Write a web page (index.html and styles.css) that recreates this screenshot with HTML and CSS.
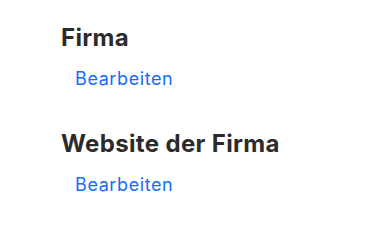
FILE: index.html
```html
<!DOCTYPE html>
<html lang="de">
<head>
<meta charset="utf-8">
<link rel="stylesheet" href="styles.css">
</head>
<body>
<main class="page">
  <section class="field">
    <h2 class="field-title">Firma</h2>
    <a class="field-edit" href="#">Bearbeiten</a>
  </section>
  <section class="field">
    <h2 class="field-title">Website der Firma</h2>
    <a class="field-edit" href="#">Bearbeiten</a>
  </section>
</main>
</body>
</html>
```
FILE: styles.css
```css
html, body {
  margin: 0;
  padding: 0;
  background: #ffffff;
}
.page {
  font-family: Inter, "Liberation Sans", sans-serif;
  padding: 24px 0 0 61px;
  display: flex;
  flex-direction: column;
  gap: 40px;
}
.field {
  display: flex;
  flex-direction: column;
  align-items: flex-start;
  gap: 16px;
}
.field-title {
  margin: 0;
  font-size: 24px;
  line-height: 28px;
  font-weight: 700;
  letter-spacing: 0.35px;
  color: #2b2b2b;
}
.field-edit {
  margin-left: 14px;
  font-size: 18px;
  line-height: 22px;
  letter-spacing: 0.6px;
  color: #146ef5;
  text-decoration: none;
}
```
